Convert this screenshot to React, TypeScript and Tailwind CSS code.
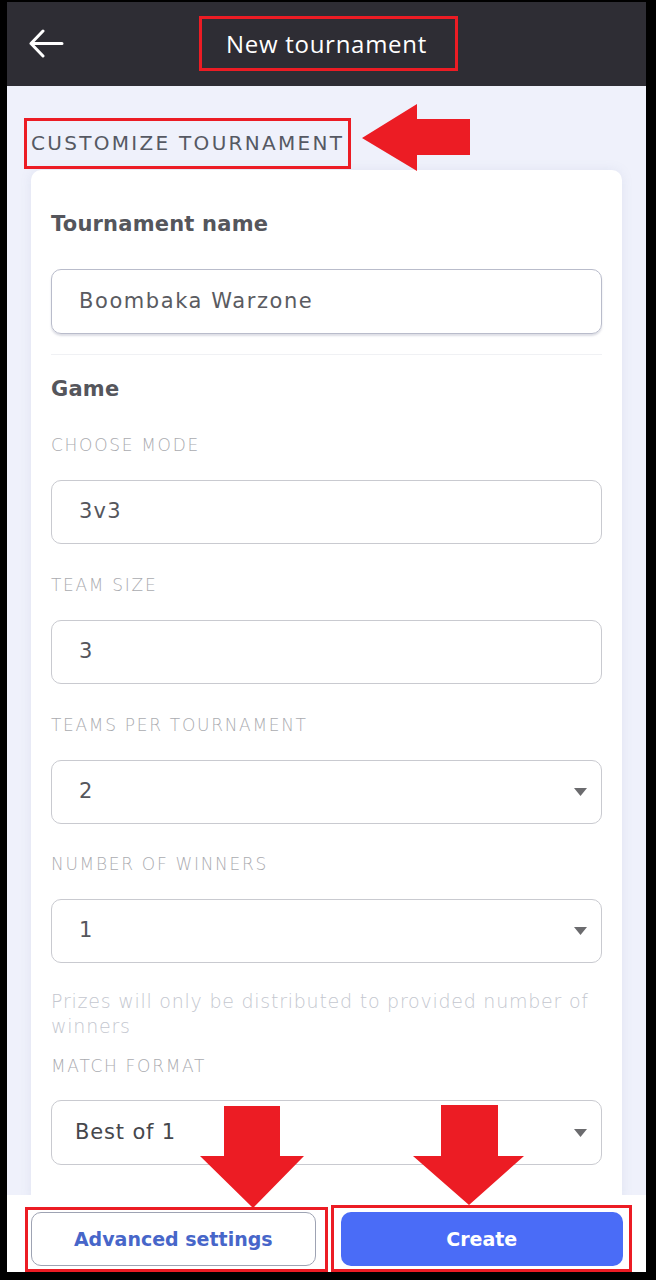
const RED = '#ec1c24';

function Caret() {
  return (
    <svg width="13" height="8" viewBox="0 0 13 8" className="shrink-0">
      <path d="M0 0 L13 0 L6.5 8 Z" fill="#6b6b6e" />
    </svg>
  );
}

function Field({ label, value, select, className = '' }: { label: string; value: string; select?: boolean; className?: string }) {
  return (
    <div className={className}>
      <div className="h-6 leading-6 text-[17px] font-light tracking-[0.1em] text-[#aaabb0]">{label}</div>
      <div className="mt-[23px] h-[64px] rounded-[10px] border border-[#c9cad0] flex items-center justify-between pl-[27px] pr-[14px]">
        <span className="text-[21px] tracking-[0.06em] text-[#55565c]">{value}</span>
        {select && <Caret />}
      </div>
    </div>
  );
}

export default function App() {
  return (
    <div className="relative w-[656px] h-[1280px] bg-black overflow-hidden pt-[2px] pl-[7px] pr-[10px] pb-[8px] font-['DejaVu_Sans',sans-serif]">
      <div className="flex flex-col h-full">
        {/* top bar */}
        <header className="h-[84px] shrink-0 bg-[#2e2d34] grid grid-cols-[1fr_auto_1fr] items-center">
          <svg width="36" height="30" viewBox="0 0 36 30" className="ml-[21px]">
            <path d="M3 14.5 H34 M15 2 L3 14.5 L15 27" stroke="white" strokeWidth="3" fill="none" strokeLinecap="round" strokeLinejoin="round" />
          </svg>
          <h1 className="text-[24px] font-normal text-white tracking-[0.03em] font-['Open_Sans',sans-serif]">New tournament</h1>
          <div />
        </header>

        {/* scrolling content */}
        <main className="flex-1 bg-[#eff1fb] overflow-hidden px-[24px] pt-[45px]">
          <h2 className="h-6 leading-6 text-[20px] tracking-[0.115em] text-[#565963]">CUSTOMIZE TOURNAMENT</h2>
          <div className="mt-[15px] bg-white rounded-[10px] shadow-[0_0_12px_rgba(120,130,170,0.12)] px-[20px] pt-[40px] pb-10">
            <div className="h-7 leading-7 text-[21px] font-bold tracking-[0.01em] text-[#55565c]">Tournament name</div>
            <div className="mt-[31px] h-[65px] rounded-[10px] border border-[#b9bccb] shadow-[0_2px_2px_rgba(120,125,150,0.25)] flex items-center pl-[27px]">
              <span className="text-[21px] tracking-[0.075em] text-[#5a5b61]">Boombaka Warzone</span>
            </div>
            <div className="mt-[20px] h-px bg-[#f0f1f4]" />
            <div className="mt-[20px] h-7 leading-7 text-[21px] font-bold tracking-[0.01em] text-[#55565c]">Game</div>
            <Field className="mt-[30px]" label="CHOOSE MODE" value="3v3" />
            <Field className="mt-[29px]" label="TEAM SIZE" value="3" />
            <Field className="mt-[29px]" label="TEAMS PER TOURNAMENT" value="2" select />
            <Field className="mt-[28px]" label="NUMBER OF WINNERS" value="1" select />
            <p className="mt-[26px] text-[19px] leading-[25px] font-light tracking-[0.04em] text-[#c4c7cf]">
              Prizes will only be distributed to provided number of winners
            </p>
            <div className="mt-[15px] h-6 leading-6 text-[17px] font-light tracking-[0.1em] text-[#aaabb0]">MATCH FORMAT</div>
            <div className="mt-[22px] h-[65px] rounded-[10px] border border-[#c9cad0] flex items-center justify-between pl-[23px] pr-[14px]">
              <span className="text-[21px] tracking-[0.04em] text-[#46474c]">Best of 1</span>
              <Caret />
            </div>
          </div>
        </main>

        {/* bottom actions */}
        <footer className="h-[77px] shrink-0 bg-white flex gap-[25px] pl-[24px] pr-[23px] pt-[17px] pb-[6px]">
          <button className="flex-1 rounded-[10px] border border-[#9ea3b3] text-[19px] font-bold text-[#4766c9]">Advanced settings</button>
          <button className="flex-1 rounded-[10px] bg-[#4a6cf7] text-[19px] font-bold text-white">Create</button>
        </footer>
      </div>

      {/* red annotations */}
      <div className="absolute left-[199px] top-[16px] w-[259px] h-[55px] border-[3px] border-[#ec1c24]" />
      <div className="absolute left-[24px] top-[118px] w-[327px] h-[51px] border-[3px] border-[#ec1c24]" />
      <div className="absolute left-[25px] top-[1207px] w-[303px] h-[65px] border-[3px] border-[#ec1c24]" />
      <div className="absolute left-[331px] top-[1205px] w-[301px] h-[67px] border-[3px] border-[#ec1c24]" />
      <svg className="absolute left-0 top-0 pointer-events-none" width="656" height="1280">
        <polygon points="362,138 417,104 417,119 470,119 470,155 417,155 417,171" fill={RED} />
        <polygon points="224,1106 280,1106 280,1156 304,1156 253,1208 200,1156 224,1156" fill={RED} />
        <polygon points="441,1105 498,1105 498,1156 524,1156 469,1205 413,1156 441,1156" fill={RED} />
      </svg>
    </div>
  );
}
